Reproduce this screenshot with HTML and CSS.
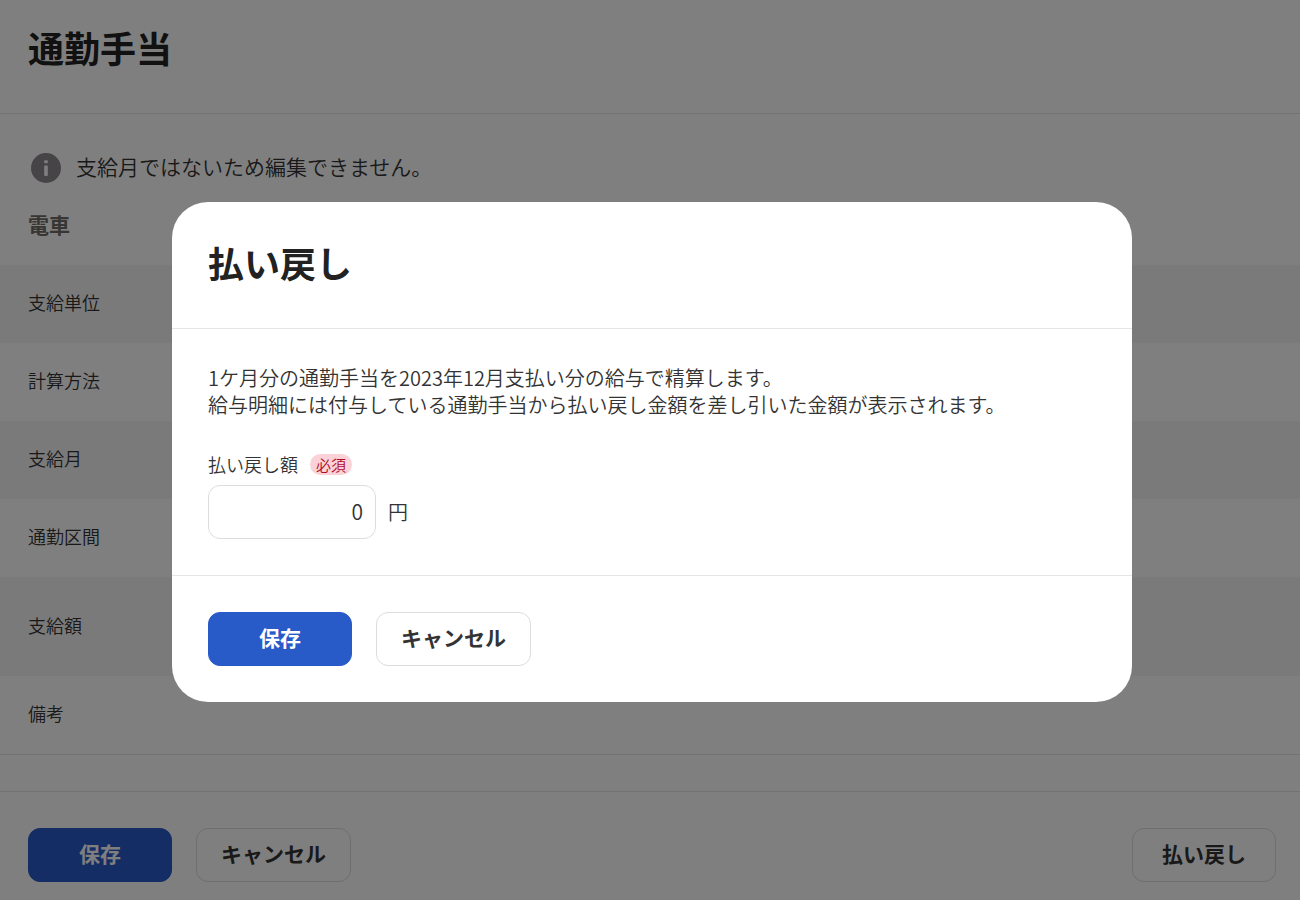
FILE: index.html
```html
<!DOCTYPE html>
<html lang="ja">
<head>
    <meta charset="UTF-8">
    <meta name="viewport" content="width=device-width, initial-scale=1.0">
    <title>通勤手当</title>
    <link rel="stylesheet" href="styles.css">
</head>
<body>
    <main class="page">
        <header class="page-header">
            <h1 class="title">通勤手当</h1>
        </header>

        <section class="page-body">
            <div class="notice">
                <svg class="notice-icon" viewBox="0 0 30 30" aria-hidden="true">
                    <circle cx="15" cy="15" r="15" fill="#8c898c"/>
                    <rect x="13.2" y="7.2" width="3.6" height="3" rx="1" fill="#fff"/>
                    <rect x="13.2" y="12.6" width="3.6" height="10.4" rx="1" fill="#fff"/>
                </svg>
                <p class="notice-text">支給月ではないため編集できません。</p>
            </div>
            <h2 class="section-title">電車</h2>
            <table class="detail-table">
                <tbody>
                    <tr><th scope="row">支給単位</th><td></td></tr>
                    <tr><th scope="row">計算方法</th><td></td></tr>
                    <tr><th scope="row">支給月</th><td></td></tr>
                    <tr><th scope="row">通勤区間</th><td></td></tr>
                    <tr class="tall"><th scope="row">支給額</th><td></td></tr>
                    <tr><th scope="row">備考</th><td></td></tr>
                </tbody>
            </table>
        </section>

        <footer class="page-footer">
            <button type="button" class="btn btn-primary">保存</button>
            <button type="button" class="btn">キャンセル</button>
            <button type="button" class="btn btn-right">払い戻し</button>
        </footer>
    </main>

    <div class="overlay">
        <form class="modal" role="dialog" aria-modal="true" aria-labelledby="modal-title">
            <header class="modal-header">
                <h2 class="title" id="modal-title">払い戻し</h2>
            </header>
            <div class="modal-body">
                <p class="description">1ケ月分の通勤手当を2023年12月支払い分の給与で精算します。<br>給与明細には付与している通勤手当から払い戻し金額を差し引いた金額が表示されます。</p>
                <div class="field-label">
                    <label for="refund-amount">払い戻し額</label>
                    <span class="badge">必須</span>
                </div>
                <div class="field">
                    <input type="text" id="refund-amount" class="amount" inputmode="numeric" value="0">
                    <span>円</span>
                </div>
            </div>
            <footer class="modal-footer">
                <button type="button" class="btn btn-primary">保存</button>
                <button type="button" class="btn">キャンセル</button>
            </footer>
        </form>
    </div>
</body>
</html>
```
FILE: styles.css
```css
* {
    box-sizing: border-box;
}

body {
    margin: 0;
    background: #fff;
    color: #333;
    font-family: "Noto Sans CJK JP", "Liberation Sans", sans-serif;
    font-weight: 350;
    overflow: hidden;
}

h1,
h2,
p {
    margin: 0;
}

.title {
    color: #222;
    font-size: 36px;
    font-weight: 700;
    line-height: 54px;
}

/* Page */
.page-header {
    padding: 20px 28px 39px;
    border-bottom: 1px solid #e5e5e5;
}

.page-body {
    padding: 36px 0;
}

.notice {
    display: flex;
    align-items: center;
    gap: 15px;
    padding: 0 31px;
    font-size: 21px;
}

.notice-icon {
    width: 30px;
    height: 30px;
}

.notice-text {
    padding-bottom: 4px;
    line-height: 32px;
}

.section-title {
    padding: 23px 28px 25px;
    color: #706d65;
    font-size: 21px;
    font-weight: 700;
    line-height: 31px;
}

.detail-table {
    width: 100%;
    border-collapse: collapse;
    border-bottom: 1px solid #e5e5e5;
}

.detail-table tr {
    height: 78px;
}

.detail-table tr:nth-child(odd) {
    background: #f5f5f5;
}

.detail-table .tall {
    height: 99px;
}

.detail-table th {
    width: 240px;
    padding: 0 28px 4px;
    font-size: 18px;
    font-weight: 350;
    text-align: left;
}

.page-footer {
    display: flex;
    gap: 24px;
    padding: 36px 24px 36px 28px;
    border-top: 1px solid #e5e5e5;
}

/* Buttons */
.btn {
    min-width: 144px;
    height: 54px;
    padding: 0 24px 4px;
    border: 1px solid #ddd;
    border-radius: 12px;
    background: #fff;
    color: #333;
    font-family: inherit;
    font-size: 21px;
    font-weight: 700;
    cursor: pointer;
}

.btn-primary {
    border-color: #285ac8;
    background: #285ac8;
    color: #fff;
}

.btn-right {
    margin-left: auto;
}

/* Modal */
.overlay {
    position: fixed;
    inset: 0;
    display: flex;
    align-items: center;
    justify-content: center;
    padding: 4px 0 0 4px;
    background: rgba(0, 0, 0, 0.5);
}

.modal {
    width: 960px;
    max-width: 100%;
    border-radius: 36px;
    background: #fff;
}

.modal-header {
    padding: 33px 36px 39px;
    border-bottom: 1px solid #e5e5e5;
}

.modal-body {
    padding: 35px 36px 36px;
}

.description {
    font-size: 20px;
    line-height: 27px;
}

.field-label {
    display: flex;
    align-items: center;
    gap: 12px;
    margin: 31px 0 6px;
    font-size: 18px;
    line-height: 30px;
}

.badge {
    padding: 0 6px;
    border-radius: 12px;
    background: #fad2d7;
    color: #af0a28;
    font-size: 15px;
    line-height: 21px;
}

.field {
    display: flex;
    align-items: center;
    gap: 12px;
    font-size: 20px;
    line-height: 30px;
}

.amount {
    width: 168px;
    height: 54px;
    padding: 0 12px 2px;
    border: 1px solid #ddd;
    border-radius: 12px;
    background: #fff;
    color: #333;
    font-family: inherit;
    font-size: 21px;
    font-weight: 350;
    text-align: right;
}

.modal-footer {
    display: flex;
    gap: 24px;
    padding: 36px;
    border-top: 1px solid #e5e5e5;
}
```
